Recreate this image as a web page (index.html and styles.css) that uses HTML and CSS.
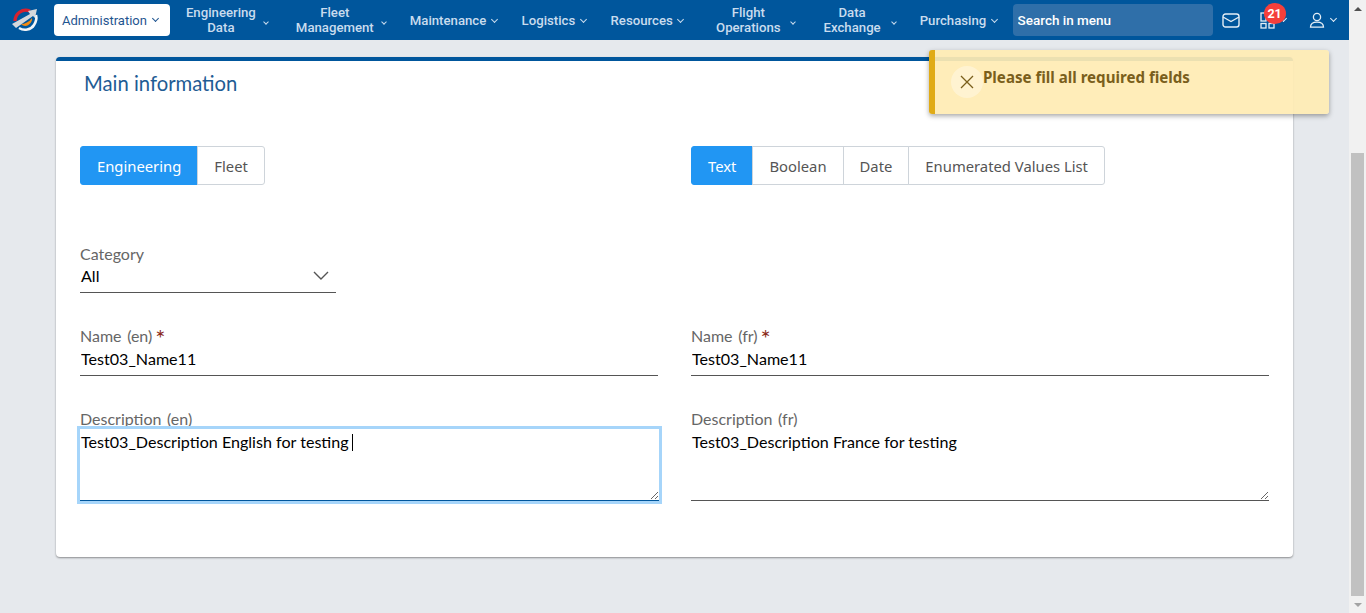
FILE: index.html
```html
<!DOCTYPE html>
<html lang="en">
<head>
    <meta charset="UTF-8">
    <title>Main information</title>
    <link rel="stylesheet" href="styles.css">
</head>
<body>
    <div class="page">
        <header class="nav">
            <svg class="logo" width="28" height="26" viewBox="0 0 28 26">
                <path d="M4 14C4 7 11 1 19 4" fill="none" stroke="#d8222f" stroke-width="3.4"/>
                <path d="M10 17c4 0 8-2 11-6 1 5-6 11-11 6z" fill="#f28a12"/>
                <path d="M8 21c5 3 12 2 15-3 2-3 3-6 2-10" fill="none" stroke="#f2f5f8" stroke-width="2.6"/>
                <path d="M1 17L19 7l-2-3 9-2-2 9-2-2L5 21z" fill="#d5d8dc"/>
            </svg>
            <a class="item active">Administration <span class="chev"></span></a>
            <a class="item two eng">Engineering<br>Data <span class="chev"></span></a>
            <a class="item two fleet">Fleet<br>Management <span class="chev"></span></a>
            <a class="item">Maintenance <span class="chev"></span></a>
            <a class="item">Logistics <span class="chev"></span></a>
            <a class="item">Resources <span class="chev"></span></a>
            <a class="item two flight">Flight<br>Operations <span class="chev"></span></a>
            <a class="item two data">Data<br>Exchange <span class="chev"></span></a>
            <a class="item">Purchasing <span class="chev"></span></a>
            <input class="search" value="Search in menu">
            <svg class="ico mail" width="18" height="15" viewBox="0 0 18 15" fill="none" stroke="#e4eef6" stroke-width="1.4">
                <rect x="1" y="1" width="16" height="13" rx="2.5"/>
                <path d="M1 4l8 4.5L17 4"/>
            </svg>
            <div class="apps">
                <svg width="16" height="17" viewBox="0 0 16 17" fill="none" stroke="#e4eef6" stroke-width="1.3">
                    <rect x="1" y="1" width="5" height="8"/>
                    <rect x="1" y="11.500" width="5" height="4.500"/>
                    <rect x="9" y="11.500" width="5" height="4.500"/>
                </svg>
                <span class="chev white"></span>
                <span class="badge">21</span>
            </div>
            <div class="user">
                <svg width="16" height="16" viewBox="0 0 16 16" fill="none" stroke="#e4eef6" stroke-width="1.3">
                    <circle cx="8" cy="5" r="3.6"/>
                    <path d="M1.500 15.200c0-3.600 2.400-5 6.500-5s6.500 1.400 6.500 5z"/>
                </svg>
                <span class="chev white"></span>
            </div>
        </header>

        <main class="content">
            <section class="card">
                <h2>Main information</h2>

                <div class="row tabs-row">
                    <div class="col">
                        <div class="tabs">
                            <button class="on">Engineering</button>
                            <button>Fleet</button>
                        </div>
                    </div>
                    <div class="col">
                        <div class="tabs">
                            <button class="on">Text</button>
                            <button>Boolean</button>
                            <button>Date</button>
                            <button>Enumerated Values List</button>
                        </div>
                    </div>
                </div>

                <div class="field category">
                    <label>Category</label>
                    <div class="select">
                        <span>All</span>
                        <svg width="16" height="9" viewBox="0 0 16 9" fill="none" stroke="#555" stroke-width="1.4"><path d="M1 1l7 7 7-7"/></svg>
                    </div>
                </div>

                <div class="row names">
                    <div class="col field">
                        <label>Name (en)<i>*</i></label>
                        <input type="text" value="Test03_Name11">
                    </div>
                    <div class="col field">
                        <label>Name (fr)<i>*</i></label>
                        <input type="text" value="Test03_Name11">
                    </div>
                </div>

                <div class="row descs">
                    <div class="col field">
                        <label>Description (en)</label>
                        <div class="area-wrap">
                            <textarea class="focus">Test03_Description English for testing </textarea>
                            <span class="caret"></span>
                        </div>
                    </div>
                    <div class="col field">
                        <label>Description (fr)</label>
                        <div class="area-wrap">
                            <textarea>Test03_Description France for testing</textarea>
                        </div>
                    </div>
                </div>
            </section>
        </main>

        <div class="toast">
            <span class="close">
                <svg width="14" height="14" viewBox="0 0 14 14" fill="none" stroke="#7a5f1c" stroke-width="1.3"><path d="M1 1l12 12M13 1L1 13"/></svg>
            </span>
            <strong>Please fill all required fields</strong>
        </div>
    </div>

    <div class="scrollbar">
        <span class="arrow up"></span>
        <div class="track"><div class="thumb"></div></div>
        <span class="arrow down"></span>
    </div>
</body>
</html>
```

FILE: styles.css
```css
html, body {
    margin: 0;
    height: 100%;
    overflow: hidden;
}
body {
    display: flex;
    font-family: "Lato", sans-serif;
    background: #e6e9ed;
    color: #000;
}
.page {
    position: relative;
    flex: 1;
    min-width: 0;
}

/* top bar */
.nav {
    display: flex;
    align-items: center;
    height: 40px;
    padding-left: 11px;
    background: #00569c;
    font-family: "Roboto", sans-serif;
}
.logo {
    margin-right: 15px;
    flex: none;
}
.item {
    display: block;
    position: relative;
    padding: 0 12px;
    color: #c9dcee;
    font-size: 13.200px;
    font-weight: 500;
    line-height: 15px;
    text-align: center;
    white-space: nowrap;
}
.item.two .chev {
    position: absolute;
    right: 11.500px;
    top: 15px;
    width: 3px;
    height: 3px;
    margin: 0;
}
.item.eng {
    padding: 0 24px 0 12px;
}
.item.fleet {
    padding: 0 24px 0 16px;
}
.item.flight {
    padding: 0 26px 0 20px;
}
.item.data {
    padding: 0 27px 0 17px;
}
.item.active {
    display: flex;
    align-items: center;
    gap: 4px;
    height: 32px;
    padding: 0 11px 0 8px;
    margin-right: 4px;
    box-sizing: border-box;
    background: #fff;
    border-radius: 4px;
    color: #1f5590;
    font-size: 13px;
    font-weight: 400;
}
.chev {
    display: inline-block;
    width: 4px;
    height: 4px;
    margin: 0 1px 3px 2px;
    border-right: 1.3px solid currentColor;
    border-bottom: 1.3px solid currentColor;
    transform: rotate(45deg);
}
.search {
    width: 200px;
    height: 32px;
    box-sizing: border-box;
    margin-left: 3px;
    padding: 0 5px;
    border: 0;
    border-radius: 4px;
    background: #2f6fa9;
    color: #fff;
    font: 500 13.500px "Roboto", sans-serif;
}
.mail {
    margin-left: 9px;
}
.apps {
    position: relative;
    display: flex;
    align-items: center;
    gap: 3px;
    margin-left: 20px;
    color: #e4eef6;
}
.badge {
    position: absolute;
    left: 4px;
    top: -9px;
    width: 22px;
    height: 21px;
    border-radius: 50%;
    background: #f43f3b;
    color: #fff;
    font-size: 12.500px;
    font-weight: 700;
    line-height: 21px;
    text-align: center;
}
.user {
    display: flex;
    align-items: center;
    gap: 4px;
    margin-left: 22px;
    color: #e4eef6;
}

/* card */
.content {
    padding: 17px 56px 0;
}
.card {
    height: 496px;
    padding: 0 24px;
    background: #fff;
    border-top: 4px solid #00569c;
    border-radius: 4px;
    box-shadow: 0 1px 2px rgba(0, 0, 0, .4);
}
h2 {
    margin: 0;
    padding: 9px 0 0 4px;
    color: #1f5c94;
    font-size: 20.250px;
    font-weight: normal;
    line-height: 26px;
}
.row {
    display: flex;
    gap: 33px;
}
.col {
    flex: 0 0 578px;
}
.tabs-row {
    margin-top: 50px;
}
.tabs {
    display: flex;
}
.tabs button {
    height: 39px;
    padding: 0 16px;
    margin-left: -1px;
    background: #fff;
    border: 1px solid #ced4da;
    color: #555;
    font: 14.800px "Noto Sans", sans-serif;
}
.tabs button:first-child {
    margin-left: 0;
    border-radius: 3px 0 0 3px;
}
.tabs button:last-child {
    border-radius: 0 3px 3px 0;
}
.tabs button.on {
    background: #2196f3;
    border-color: #2196f3;
    color: #fff;
}

/* fields */
.field label {
    display: block;
    color: #666;
    font-size: 16px;
    line-height: 20px;
    word-spacing: 1.500px;
}
.field i {
    color: #8b2b1a;
    font-style: normal;
    font-size: 24px;
    margin-left: 3px;
    line-height: 0;
    vertical-align: -5px;
}
.category {
    width: 256px;
    margin-top: 59px;
}
.select {
    display: flex;
    justify-content: space-between;
    align-items: center;
    height: 23px;
    padding: 0 7px 5px 1px;
    border-bottom: 1px solid #555;
    font-size: 16.100px;
}
.field input {
    display: block;
    width: 100%;
    height: 30px;
    box-sizing: border-box;
    padding: 0 1px 5px;
    border: 0;
    border-bottom: 1px solid #555;
    outline: 0;
    font: 16.100px "Lato", sans-serif;
}
.names {
    margin-top: 33px;
}
.descs {
    margin-top: 33px;
}
.area-wrap {
    position: relative;
}
textarea {
    display: block;
    width: 100%;
    height: 72px;
    box-sizing: border-box;
    padding: 3px 1px;
    border: 0;
    border-bottom: 1px solid #555;
    outline: 0;
    font: 16.100px/20px "Lato", sans-serif;
    text-rendering: optimizeLegibility;
    background: #fff;
}
textarea.focus {
    width: calc(100% + 1px);
    border-bottom: 1px solid #00569c;
    box-shadow: 0 0 0 3px #a6d5fa;
}
.caret {
    position: absolute;
    left: 272px;
    top: 5px;
    width: 1px;
    height: 17px;
    background: #000;
}

/* warning toast */
.toast {
    position: absolute;
    left: 929px;
    top: 50px;
    display: flex;
    width: 400px;
    height: 64px;
    box-sizing: border-box;
    padding: 16px 0 0 16px;
    background: rgba(255, 236, 179, .92);
    border-left: 6px solid #e0ab16;
    border-radius: 3px;
    box-shadow: 0 2px 5px rgba(0, 0, 0, .35);
    color: #7a5f1c;
    font-family: "Noto Sans", sans-serif;
    font-size: 15.100px;
}
.toast strong {
    line-height: 23px;
}
.close {
    display: flex;
    align-items: center;
    justify-content: center;
    width: 32px;
    height: 32px;
    border-radius: 50%;
    background: rgba(255, 255, 255, .35);
}

/* scrollbar */
.scrollbar {
    display: flex;
    flex-direction: column;
    flex: 0 0 17px;
    background: #f1f1f1;
}
.arrow {
    flex: 0 0 17px;
    display: flex;
    justify-content: center;
    align-items: center;
}
.arrow::before {
    content: "";
    border-left: 4px solid transparent;
    border-right: 4px solid transparent;
}
.up::before {
    border-bottom: 4px solid #505050;
}
.down::before {
    border-top: 4px solid #a3a3a3;
}
.track {
    flex: 1;
    display: flex;
    flex-direction: column;
    justify-content: flex-end;
    padding: 0 2px;
}
.thumb {
    height: 443px;
    background: #c1c1c1;
}
```
